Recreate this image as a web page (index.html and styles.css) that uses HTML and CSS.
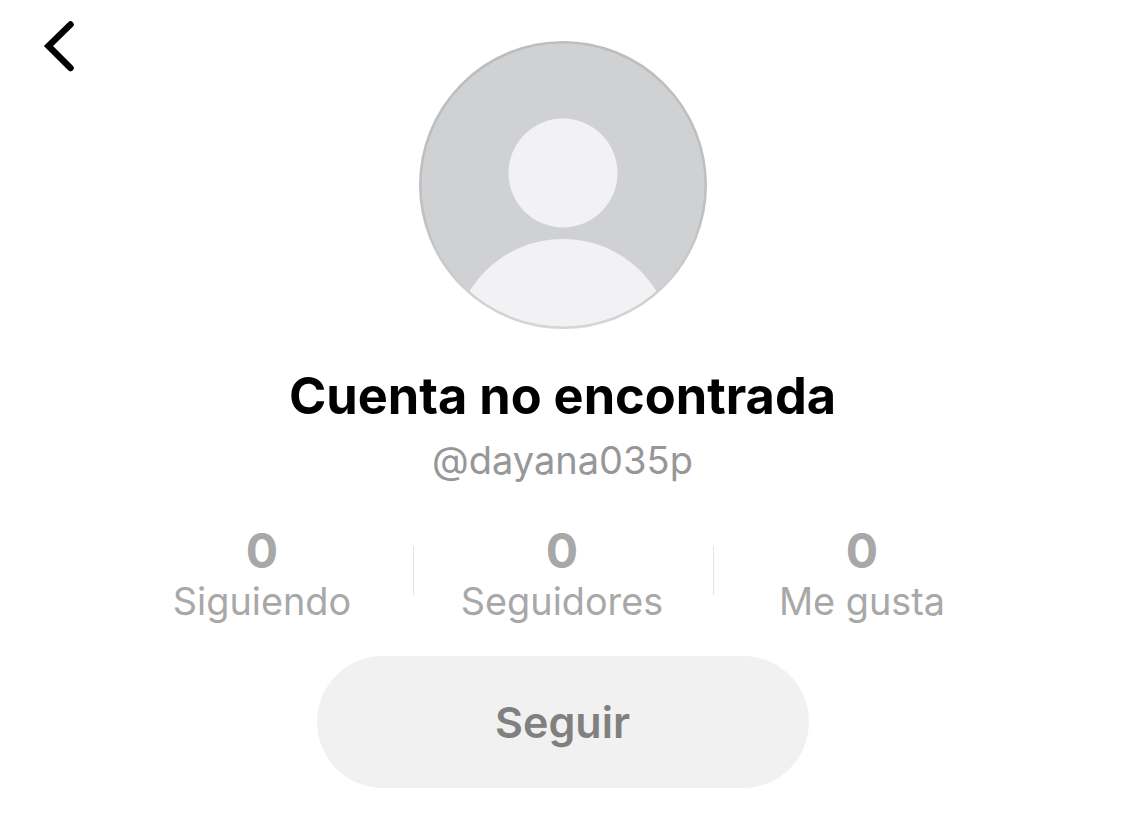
FILE: index.html
```html
<!DOCTYPE html>
<html lang="es">
<head>
<meta charset="utf-8">
<title>Cuenta no encontrada</title>
<link rel="stylesheet" href="styles.css">
</head>
<body>
<main class="page">
  <header class="top">
    <button class="back" aria-label="Volver">
      <svg width="40" height="60" viewBox="0 0 40 60"><path d="M28.5 6.5 L6.5 28 L28.5 50" fill="none" stroke="#000" stroke-width="6.5" stroke-linecap="round" stroke-linejoin="miter"/></svg>
    </button>
    <svg class="avatar" width="288" height="288" viewBox="0 0 288 288">
      <defs>
        <clipPath id="c"><circle cx="144" cy="144" r="143"/></clipPath>
        <linearGradient id="ring" x1="0" y1="0" x2="0" y2="1">
          <stop offset="0" stop-color="#bcbdbf"/>
          <stop offset="0.6" stop-color="#bfc0c2"/>
          <stop offset="1" stop-color="#d6d6d8"/>
        </linearGradient>
      </defs>
      <circle cx="144" cy="144" r="143" fill="#d0d1d3"/>
      <circle cx="144" cy="132" r="54.5" fill="#f2f2f4"/>
      <circle cx="144" cy="308" r="110" fill="#f2f2f4" clip-path="url(#c)"/>
      <circle cx="144" cy="144" r="142.7" fill="none" stroke="url(#ring)" stroke-width="2.6"/>
    </svg>
    <span></span>
  </header>
  <h1 class="title">Cuenta no encontrada</h1>
  <p class="handle">@dayana035p</p>
  <section class="stats">
    <div class="stat"><strong>0</strong><span>Siguiendo</span></div>
    <div class="stat"><strong>0</strong><span>Seguidores</span></div>
    <div class="stat"><strong>0</strong><span>Me gusta</span></div>
  </section>
  <button class="follow">Seguir</button>
</main>
</body>
</html>
```
FILE: styles.css
```css
* { box-sizing: border-box; }
html, body { margin: 0; background: #fff; }
body { font-family: Inter, "Liberation Sans", sans-serif; overflow: hidden; }
.page { width: 1125px; height: 821px; display: flex; flex-direction: column; align-items: center; }
.top { width: 100%; display: grid; grid-template-columns: 1fr 288px 1fr; padding-top: 41px; margin-left: 1px; }
.back { justify-self: start; align-self: start; margin: -23px 0 0 41px; padding: 0; border: 0; background: none; width: 40px; height: 60px; }
.back svg { display: block; }
.avatar { display: block; }
.title { margin: 40px 0 0; font-size: 50.5px; line-height: 54px; font-weight: 700; color: #000; }
.handle { margin: 17px 0 0; font-size: 38px; line-height: 40px; color: #979797; }
.stats { display: grid; grid-template-columns: repeat(3, 300px); margin-top: 44px; margin-left: -1px; }
.stat { position: relative; display: flex; flex-direction: column; align-items: center; }
.stat + .stat::before { content: ""; position: absolute; left: 1px; top: 22px; height: 49px; width: 1px; background: #e3e3e3; }
.stat strong { font-size: 48px; line-height: 52px; font-weight: 700; color: #a8a8a8; padding-top: 1px; margin-bottom: -1px; }
.stat span { font-size: 37.8px; line-height: 50px; color: #a8a8a8; }
.follow { margin-top: 30px; width: 492px; height: 132px; border: 0; border-radius: 66px; background: #f1f1f1; color: #808080; font: 600 43px Inter, "Liberation Sans", sans-serif; }
```
